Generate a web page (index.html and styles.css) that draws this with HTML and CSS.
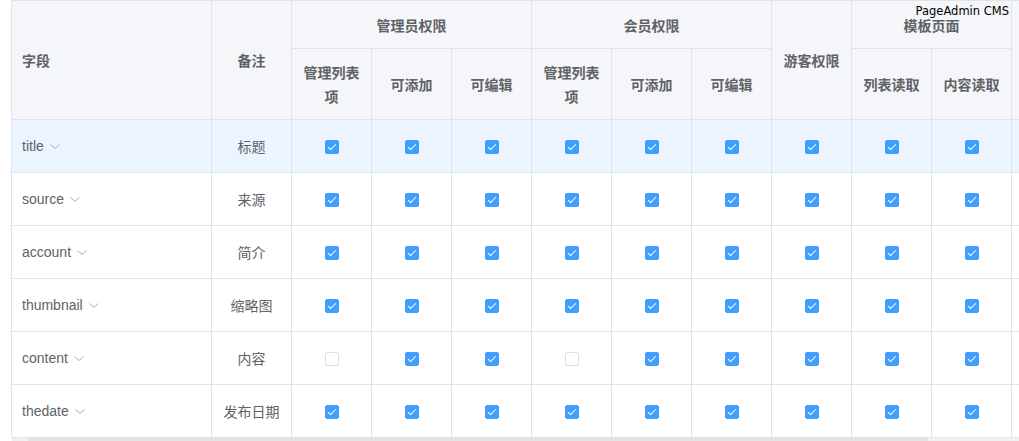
FILE: index.html
```html
<!DOCTYPE html>
<html lang="zh-CN">
<head>
<meta charset="utf-8">
<title>字段权限</title>
<link rel="stylesheet" href="styles.css">
</head>
<body>
<div class="page">
  <div class="table-wrap">
    <table class="perm-table">
      <colgroup>
        <col class="c-field"><col class="c-n"><col class="c-n"><col class="c-n"><col class="c-n"><col class="c-n"><col class="c-n"><col class="c-n"><col class="c-n"><col class="c-n"><col class="c-n"><col class="c-n">
      </colgroup>
      <thead>
        <tr class="h1">
          <th rowspan="2" class="left">字段</th>
          <th rowspan="2">备注</th>
          <th colspan="3">管理员权限</th>
          <th colspan="3">会员权限</th>
          <th rowspan="2">游客权限</th>
          <th colspan="2">模板页面</th>
          <th rowspan="2"></th>
        </tr>
        <tr class="h2">
          <th>管理列表项</th>
          <th>可添加</th>
          <th>可编辑</th>
          <th>管理列表项</th>
          <th>可添加</th>
          <th>可编辑</th>
          <th>列表读取</th>
          <th>内容读取</th>
        </tr>
      </thead>
      <tbody>
        <tr class="hl">
          <td class="left"><span class="fname">title<svg class="chev" viewBox="0 0 10 5"><path d="M0.5 0.5 L5 4.5 L9.5 0.5"/></svg></span></td>
          <td>标题</td>
          <td><span class="cb on"></span></td><td><span class="cb on"></span></td><td><span class="cb on"></span></td>
          <td><span class="cb on"></span></td><td><span class="cb on"></span></td><td><span class="cb on"></span></td>
          <td><span class="cb on"></span></td><td><span class="cb on"></span></td><td><span class="cb on"></span></td><td></td>
        </tr>
        <tr>
          <td class="left"><span class="fname">source<svg class="chev" viewBox="0 0 10 5"><path d="M0.5 0.5 L5 4.5 L9.5 0.5"/></svg></span></td>
          <td>来源</td>
          <td><span class="cb on"></span></td><td><span class="cb on"></span></td><td><span class="cb on"></span></td>
          <td><span class="cb on"></span></td><td><span class="cb on"></span></td><td><span class="cb on"></span></td>
          <td><span class="cb on"></span></td><td><span class="cb on"></span></td><td><span class="cb on"></span></td><td></td>
        </tr>
        <tr>
          <td class="left"><span class="fname">account<svg class="chev" viewBox="0 0 10 5"><path d="M0.5 0.5 L5 4.5 L9.5 0.5"/></svg></span></td>
          <td>简介</td>
          <td><span class="cb on"></span></td><td><span class="cb on"></span></td><td><span class="cb on"></span></td>
          <td><span class="cb on"></span></td><td><span class="cb on"></span></td><td><span class="cb on"></span></td>
          <td><span class="cb on"></span></td><td><span class="cb on"></span></td><td><span class="cb on"></span></td><td></td>
        </tr>
        <tr>
          <td class="left"><span class="fname">thumbnail<svg class="chev" viewBox="0 0 10 5"><path d="M0.5 0.5 L5 4.5 L9.5 0.5"/></svg></span></td>
          <td>缩略图</td>
          <td><span class="cb on"></span></td><td><span class="cb on"></span></td><td><span class="cb on"></span></td>
          <td><span class="cb on"></span></td><td><span class="cb on"></span></td><td><span class="cb on"></span></td>
          <td><span class="cb on"></span></td><td><span class="cb on"></span></td><td><span class="cb on"></span></td><td></td>
        </tr>
        <tr>
          <td class="left"><span class="fname">content<svg class="chev" viewBox="0 0 10 5"><path d="M0.5 0.5 L5 4.5 L9.5 0.5"/></svg></span></td>
          <td>内容</td>
          <td><span class="cb"></span></td><td><span class="cb on"></span></td><td><span class="cb on"></span></td>
          <td><span class="cb"></span></td><td><span class="cb on"></span></td><td><span class="cb on"></span></td>
          <td><span class="cb on"></span></td><td><span class="cb on"></span></td><td><span class="cb on"></span></td><td></td>
        </tr>
        <tr>
          <td class="left"><span class="fname">thedate<svg class="chev" viewBox="0 0 10 5"><path d="M0.5 0.5 L5 4.5 L9.5 0.5"/></svg></span></td>
          <td>发布日期</td>
          <td><span class="cb on"></span></td><td><span class="cb on"></span></td><td><span class="cb on"></span></td>
          <td><span class="cb on"></span></td><td><span class="cb on"></span></td><td><span class="cb on"></span></td>
          <td><span class="cb on"></span></td><td><span class="cb on"></span></td><td><span class="cb on"></span></td><td></td>
        </tr>
      </tbody>
    </table>
  </div>
  <div class="scrollbar"><div class="thumb"></div></div>
  <div class="watermark">PageAdmin CMS</div>
</div>
</body>
</html>
```

FILE: styles.css
```css
html, body {
  margin: 0;
  padding: 0;
  background: #fff;
  overflow: hidden;
}
.page {
  position: relative;
  padding-left: 11px;
  width: 1008px;
  height: 441px;
  overflow: hidden;
  font-family: "Liberation Sans", "Noto Sans CJK SC", sans-serif;
  font-size: 14px;
  color: #606266;
}
.table-wrap {
  width: 1200px;
}
.perm-table {
  border-collapse: separate;
  border-spacing: 0;
  table-layout: fixed;
  width: 1081px;
  border-top: 1px solid #dfe3ea;
  border-left: 1px solid #dfe3ea;
}
.c-field { width: 200px; }
.c-n { width: 80px; }
.perm-table th,
.perm-table td {
  border-right: 1px solid #dfe3ea;
  border-bottom: 1px solid #dfe3ea;
  padding: 0 10px;
  text-align: center;
  vertical-align: middle;
  line-height: 24px;
  box-sizing: border-box;
}
.perm-table th {
  background: #f5f6fa;
  font-weight: bold;
  color: #606266;
  font-family: "Noto Sans CJK SC", "Liberation Sans", sans-serif;
}
.perm-table th.left,
.perm-table td.left {
  text-align: left;
}
.h1 { height: 48px; }
.h2 { height: 71px; }
tbody tr { height: 53px; }
tbody td {
  background: #fff;
}
tbody td:nth-child(2) {
  font-family: "Noto Sans CJK SC", sans-serif;
}
tbody tr.hl td {
  background: #ecf5ff;
}
.fname {
  display: inline-flex;
  align-items: center;
  gap: 6px;
}
.chev {
  width: 10px;
  height: 5px;
  fill: none;
  stroke: #a8abb2;
  stroke-width: 1;
}
.cb {
  display: inline-block;
  width: 14px;
  height: 14px;
  box-sizing: border-box;
  border: 1px solid #dcdfe6;
  border-radius: 2px;
  background: #fff;
  vertical-align: middle;
  position: relative;
}
.cb.on {
  background: #409eff;
  border-color: #409eff;
}
.cb.on::after {
  content: "";
  position: absolute;
  left: 4px;
  top: 1px;
  width: 3px;
  height: 7px;
  border: 1px solid #fff;
  border-top: 0;
  border-left: 0;
  transform: rotate(45deg);
}
.scrollbar {
  height: 3px;
  margin-left: 1px;
  background: #f0f0f0;
}
.thumb {
  margin-left: 16px;
  width: 900px;
  height: 3px;
  background: #e3e3e3;
}
.watermark {
  position: absolute;
  top: 4px;
  right: 10px;
  font-family: "DejaVu Sans", sans-serif;
  font-size: 11.5px;
  color: #000;
  line-height: 14px;
}
```
